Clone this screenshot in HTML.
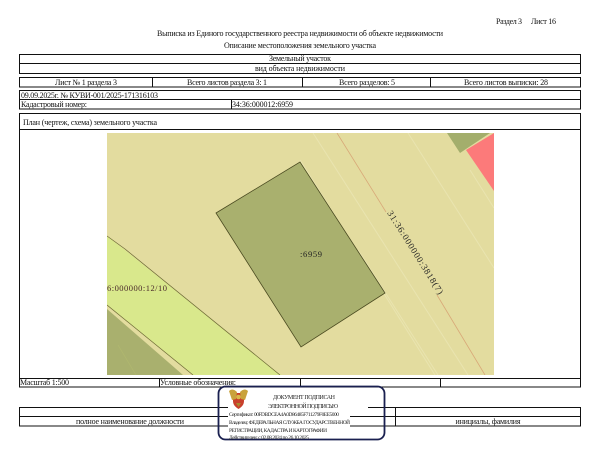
<!DOCTYPE html>
<html lang="ru"><head><meta charset="utf-8"><title>Выписка</title>
<style>
html,body{margin:0;padding:0;background:#fff;width:600px;height:464px;overflow:hidden}
svg.root{display:block;filter:blur(.3px)}
text{font-family:"Liberation Serif","Noto Serif CJK SC",serif;font-size:8px;fill:#111}
.m{text-anchor:middle}
.s{font-size:5.4px;fill:#222}
</style></head><body>
<svg class="root" width="600" height="464" viewBox="0 0 600 464" xmlns="http://www.w3.org/2000/svg">
<rect width="600" height="464" fill="#fff"/>
<text x="496" y="24" textLength="26">Раздел 3</text>
<text x="531" y="24" textLength="25">Лист 16</text>
<text x="157" y="36" textLength="286">Выписка из Единого государственного реестра недвижимости об объекте недвижимости</text>
<text x="224" y="48" textLength="152">Описание местоположения земельного участка</text>

<g fill="none" stroke="#111" stroke-width="1">
<rect x="19.5" y="54.5" width="561" height="19"/><path d="M19 63.5H581"/>
<rect x="19.5" y="77.5" width="561" height="9.5"/><path d="M152.5 77V87M302.5 77V87M430.5 77V87"/>
<rect x="19.5" y="90.5" width="561" height="18.5"/><path d="M19 99.5H581M231.5 99V109"/>
<rect x="19.5" y="113.5" width="561" height="273.5"/><path d="M19 129.5H581M19 378.5H581M159.5 378V387M300.5 378V387M440.5 378V387"/>
<rect x="19.5" y="407.5" width="561" height="18.5"/><path d="M19 416.5H581M395.5 407V426"/>
</g>

<text class="m" x="300" y="61" textLength="62">Земельный участок</text>
<text class="m" x="300" y="71" textLength="90">вид объекта недвижимости</text>
<text class="m" x="86" y="85" textLength="62">Лист № 1 раздела 3</text>
<text class="m" x="227" y="85" textLength="80">Всего листов раздела 3: 1</text>
<text class="m" x="367" y="85" textLength="56">Всего разделов: 5</text>
<text class="m" x="506" y="85" textLength="84">Всего листов выписки: 28</text>
<text x="21" y="98" textLength="137">09.09.2025г. № КУВИ-001/2025-171316103</text>
<text x="21" y="107" textLength="66">Кадастровый номер:</text>
<text x="232" y="107" textLength="61">34:36:000012:6959</text>
<text x="23" y="125" textLength="134">План (чертеж, схема) земельного участка</text>

<!-- map -->
<svg x="107" y="133" width="387" height="242" viewBox="107 133 387 242">
<rect x="107" y="133" width="387" height="242" fill="#e3dc9f"/>
<g stroke="#e9e4b0" stroke-width="1" fill="none">
<path d="M313 133L468 375M408 133L494 268M300 160L435 375M358 250L438 375M470 170L494 208"/>
</g>
<polygon points="107,236 125,250 278,373 282,375 193,375 107,305" fill="#d9e88c"/>
<path d="M107 236L125 249L280 375M107 305L193 375" stroke="#6d6a35" stroke-width=".7" fill="none"/>
<polygon points="107,309 183,375 107,375" fill="#a9b06e"/>
<path d="M118 345L136 375" stroke="#b2b96f" stroke-width=".6"/>
<polygon points="216,213 300,162 385,293 301,347" fill="#a9b06e" stroke="#4a4a20" stroke-width=".8"/>
<polygon points="447,133 490,133 460,153" fill="#a3ae6c"/>
<polygon points="466,150 494,133 494,191" fill="#fc7a7a"/>
<path d="M337 133L386 212M437 295L485 375" stroke="#d8a878" stroke-width=".8" fill="none"/>
<text x="387" y="213" transform="rotate(57.8 387 213)" textLength="97" style="font-size:9px;fill:#222">31:36:000000:3818(7)</text>
<text x="300" y="257" textLength="22" style="font-size:8.5px;fill:#222">:6959</text>
<text x="107" y="291" textLength="60" style="font-size:8.5px;fill:#4a2a2a">6:000000:12/10</text>
</svg>

<text x="20" y="385" textLength="49">Масштаб 1:500</text>
<text x="160" y="385" textLength="76">Условные обозначения:</text>
<text class="m" x="130" y="424" textLength="108">полное наименование должности</text>
<text class="m" x="488" y="424" textLength="65">инициалы, фамилия</text>

<!-- stamp -->
<rect x="262" y="388" width="106" height="22" fill="#fff"/>
<rect x="228" y="388" width="122" height="51" fill="#fff"/>
<rect x="218.5" y="386.5" width="166" height="53" rx="7" fill="none" stroke="#1a2050" stroke-width="1.8"/>
<g>
<path d="M233 393h11v8c0 4-2.500 6-5.500 8c-3-2-5.500-4-5.500-8z" fill="#c8402c"/>
<path d="M229 391c3-3 6-1 8 1l-1 7-4 1zM248 391c-3-3-6-1-8 1l1 7 4 1z" fill="#c9a23c"/>
<circle cx="238.5" cy="397" r="2.300" fill="#d9b84a"/>
<path d="M236 403h5l-2.500 4z" fill="#a8892e"/>
</g>
<text class="m s" x="304" y="399" textLength="62" style="font-size:6px">ДОКУМЕНТ ПОДПИСАН</text>
<text class="m s" x="303" y="408" textLength="70" style="font-size:6px">ЭЛЕКТРОННОЙ ПОДПИСЬЮ</text>
<text class="s" x="229" y="416" textLength="110">Сертификат: 00FDBDCEA4A0D86485F711279F0EE5000</text>
<text class="s" x="229" y="424" textLength="121">Владелец: ФЕДЕРАЛЬНАЯ СЛУЖБА ГОСУДАРСТВЕННОЙ</text>
<text class="s" x="229" y="432" textLength="98">РЕГИСТРАЦИИ, КАДАСТРА И КАРТОГРАФИИ</text>
<text class="s" x="229" y="439" textLength="80">Действителен: с 02.08.2024 по 26.10.2025</text>
</svg>
</body></html>
